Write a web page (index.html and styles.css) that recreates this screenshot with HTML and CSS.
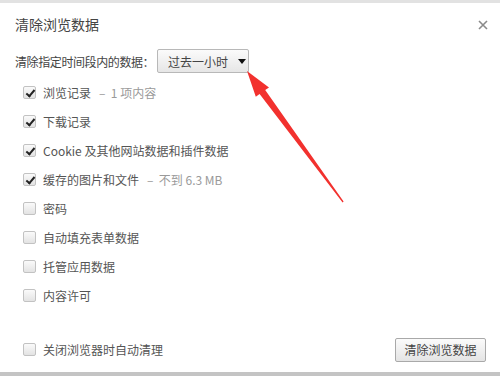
FILE: index.html
```html
<!DOCTYPE html>
<html>
<head>
  <title>清除浏览数据</title>
  <link rel="stylesheet" href="styles.css">
</head>
<body>
<div class="dialog">
  <div class="header">
    <h1 class="title">清除浏览数据</h1>
    <span class="close">
      <svg width="10" height="10" viewBox="0 0 10 10"><path d="M1 1 L9 9 M9 1 L1 9" stroke="#8a8a8a" stroke-width="1.6"/></svg>
    </span>
  </div>

  <div class="range">
    <span class="range-label">清除指定时间段内的数据：</span>
    <button class="select">过去一小时<span class="caret"></span></button>
  </div>

  <ul class="options">
    <li class="option"><span class="box checked"></span>浏览记录<span class="note">–&nbsp; 1 项内容</span></li>
    <li class="option"><span class="box checked"></span>下载记录</li>
    <li class="option"><span class="box checked"></span>Cookie 及其他网站数据和插件数据</li>
    <li class="option"><span class="box checked"></span>缓存的图片和文件<span class="note">–&nbsp; 不到 6.3 MB</span></li>
    <li class="option"><span class="box"></span>密码</li>
    <li class="option"><span class="box"></span>自动填充表单数据</li>
    <li class="option"><span class="box"></span>托管应用数据</li>
    <li class="option"><span class="box"></span>内容许可</li>
  </ul>

  <div class="footer">
    <div class="option"><span class="box"></span>关闭浏览器时自动清理</div>
    <button class="clear-btn">清除浏览数据</button>
  </div>

  <svg class="arrow" width="500" height="376" viewBox="0 0 500 376">
    <polygon points="247,71 269,87.5 265.2,90 343.6,201.6 342.6,202.4 259.6,94 255.8,96.8" fill="#f2312e"/>
  </svg>
</div>
</body>
</html>
```

FILE: styles.css
```css
body{
  margin: 0;
  background: #ffffff;
  font-family: "Noto Sans CJK SC", "Noto Sans", sans-serif;
  font-size: 12px;
  color: #555555;
}

.dialog{
  position: relative;
  height: 376px;
  box-sizing: border-box;
  border-top: 3px solid #e2e2e2;
  border-bottom: 4px solid #c4c4c4;
}

.header{
  display: flex;
  justify-content: space-between;
  align-items: flex-start;
  padding: 11px 12px 0 15px;
}

.title{
  margin: 0;
  font-size: 14px;
  font-weight: normal;
  line-height: 20px;
  color: #444444;
}

.close{
  display: block;
  margin-top: 2px;
  width: 10px;
  height: 10px;
}

.range{
  display: flex;
  align-items: center;
  margin-top: 15px;
  padding-left: 15px;
}

.range-label{
  flex: none;
  width: 142px;
  white-space: nowrap;
  letter-spacing: -0.4px;
  line-height: 23px;
  color: #444444;
}

.select{
  flex: none;
  display: flex;
  align-items: center;
  width: 92px;
  height: 24px;
  padding: 0 0 0 10px;
  box-sizing: border-box;
  border: 1px solid #b8b8b8;
  border-radius: 2px;
  background: linear-gradient(#fbfbfb, #e6e6e6);
  font-family: inherit;
  font-size: 12px;
  color: #444444;
}

.caret{
  margin-left: 10px;
  width: 0;
  height: 0;
  border-left: 4px solid transparent;
  border-right: 4px solid transparent;
  border-top: 5px solid #111111;
}

.options{
  list-style: none;
  margin: 5px 0 0 0;
  padding: 0 0 0 23px;
}

.option{
  display: flex;
  align-items: center;
  height: 29px;
  white-space: nowrap;
}

.box{
  position: relative;
  flex: none;
  width: 13px;
  height: 13px;
  box-sizing: border-box;
  margin-right: 7px;
  border: 1px solid #c2c2c2;
  border-radius: 2px;
  background: linear-gradient(#fafafa, #e3e3e3);
}

.box.checked::after{
  content: "";
  position: absolute;
  left: 3.5px;
  top: 0.5px;
  width: 3px;
  height: 7px;
  border-right: 2.5px solid #222222;
  border-bottom: 2.5px solid #222222;
  transform: rotate(40deg);
}

.note{
  margin-left: 8px;
  color: #9a9a9a;
}

.footer{
  display: flex;
  justify-content: space-between;
  align-items: center;
  margin-top: 25px;
  padding: 0 14px 0 23px;
}

.clear-btn{
  width: 91px;
  height: 24px;
  padding: 0;
  border: 1px solid #a9a9a9;
  border-radius: 2px;
  background: linear-gradient(#fbfbfb, #e4e4e4);
  font-family: inherit;
  font-size: 12px;
  color: #444444;
}

.arrow{
  position: absolute;
  left: 0;
  top: -3px;
  pointer-events: none;
}
```
